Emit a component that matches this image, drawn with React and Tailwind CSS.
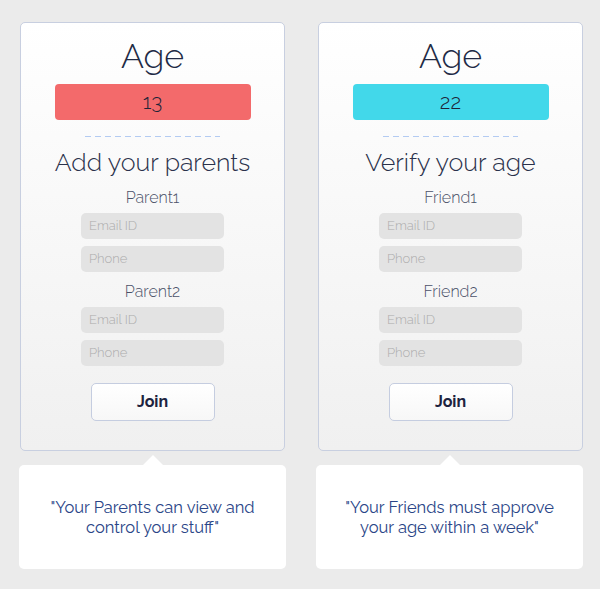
import React from "react";

const font = { fontFamily: "Raleway, Lato, 'Open Sans', sans-serif" };

function Card({ color, num, heading, who, quote, cardClass }) {
  const Input = ({ ph }) => (
    <div className="w-[143px] h-[26px] rounded-[5px] bg-[#e3e3e3] pl-[8px] flex items-center text-[13px] text-[#acacac] font-light">
      {ph}
    </div>
  );
  return (
    <div className="flex flex-col">
      <div
        className={`${cardClass} w-[265px] h-[429px] border border-[#c8cfe0] rounded-[5px] bg-[linear-gradient(to_bottom,#ffffff,#f0f0f0)] flex flex-col items-center pt-[11px]`}
      >
        <div className="h-[44px] leading-[44px] text-[34px] font-light text-[#222a45]">Age</div>
        <div
          className={`${color} mt-[6px] w-[196px] h-[36px] rounded-[4px] flex items-center justify-center text-[21px] font-light text-[#1e2438]`}
        >
          {num}
        </div>
        <div className="mt-[16px] w-[135px] h-[1px] bg-[linear-gradient(to_right,#b3cbf2_60%,transparent_60%)] bg-[length:10px_1px]" />
        <div className="mt-[10px] h-[30px] leading-[30px] text-[25px] font-light text-[#2a314b]">{heading}</div>
        <div className="mt-[11px] h-[20px] leading-[20px] text-[16px] font-light text-[#4b5168]">{who}1</div>
        <div className="mt-[5px] flex flex-col gap-[7px]">
          <Input ph="Email ID" />
          <Input ph="Phone" />
        </div>
        <div className="mt-[10px] h-[20px] leading-[20px] text-[16px] font-light text-[#4b5168]">{who}2</div>
        <div className="mt-[5px] flex flex-col gap-[7px]">
          <Input ph="Email ID" />
          <Input ph="Phone" />
        </div>
        <div className="mt-[17px] w-[124px] h-[38px] rounded-[5px] border border-[#c5cde0] bg-[linear-gradient(to_bottom,#ffffff,#f7f7f7)] flex items-center justify-center text-[16px] font-bold text-[#1d2340]">
          Join
        </div>
      </div>
      <div className="relative mt-[14px] w-[267px] h-[104px] bg-white rounded-[5px] flex items-center justify-center text-center text-[16.5px] leading-[20px] text-[#2a4587] font-normal px-[10px]">
        <div className="absolute left-1/2 -translate-x-1/2 -top-[10px] w-0 h-0 border-l-[10px] border-r-[10px] border-b-[10px] border-l-transparent border-r-transparent border-b-white" />
        {quote}
      </div>
    </div>
  );
}

export default function App() {
  return (
    <div className="w-[600px] h-[589px] bg-[#ebebeb] pt-[22px] pl-[19px] flex gap-[30px]" style={font}>
      <Card
        color="bg-[#f36a6b]"
        num="13"
        heading="Add your parents"
        who="Parent"
        quote={<span>"Your Parents can view and<br />control your stuff"</span>}
        cardClass="ml-[1px]"
      />
      <Card
        color="bg-[#42d8ea]"
        num="22"
        heading="Verify your age"
        who="Friend"
        quote={<span>"Your Friends must approve<br />your age within a week"</span>}
        cardClass="ml-[2px]"
      />
    </div>
  );
}
